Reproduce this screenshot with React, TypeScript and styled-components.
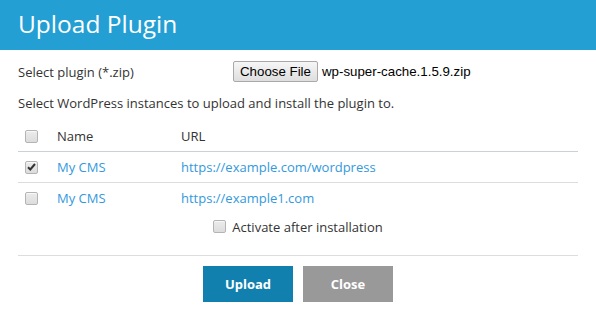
import React from "react";
import styled, { createGlobalStyle } from "styled-components";

const Global = createGlobalStyle`
  html, body { margin: 0; padding: 0; background: #fff; }
  body { font-family: "Open Sans", "Liberation Sans", sans-serif; font-size: 13px; color: #333; }
`;

const Dialog = styled.div`
  width: 596px;
  height: 311px;
  background: #fff;
  overflow: hidden;
`;

const Header = styled.header`
  height: 50px;
  background: #239fd4;
  padding: 0 18px;
  display: flex;
  align-items: center;
`;

const Title = styled.h1`
  margin: 0;
  font-weight: 400;
  font-size: 24.5px;
  color: #fff;
  line-height: 1;
  position: relative;
  top: -1px;
`;

const Body = styled.div`
  padding: 11px 18px 0;
`;

const FileRow = styled.div`
  display: flex;
  align-items: center;
  height: 21px;
`;

const Label = styled.span`
  width: 215px;
  flex: none;
  line-height: 21px;
  position: relative;
  top: 1px;
`;

const FileButton = styled.button`
  font-family: "Liberation Sans", Arial, sans-serif;
  font-size: 13.3px;
  color: #000;
  height: 21px;
  width: 85px;
  padding: 0;
  border: 1px solid #a9a9a9;
  border-radius: 2px;
  background: linear-gradient(#f6f6f6, #dedede);
`;

const FileName = styled.span`
  font-family: "Liberation Sans", Arial, sans-serif;
  font-size: 13.3px;
  color: #000;
  margin-left: 4px;
`;

const Intro = styled.p`
  margin: 0;
  height: 28px;
  line-height: 20px;
  padding-top: 11px;
`;

const Table = styled.div`
  display: flex;
  flex-direction: column;
`;

const Row = styled.div<{ $line?: "blue" | "gray" | "none" }>`
  display: grid;
  grid-template-columns: 39px 124px 1fr;
  align-items: center;
  height: 30px;
  border-bottom: 1px solid
    ${(p) => (p.$line === "blue" ? "#c9d1d9" : p.$line === "gray" ? "#dddddd" : "transparent")};
`;

const CheckCell = styled.div`
  padding-left: 7px;
  display: flex;
  align-items: center;
`;

const Box = styled.span<{ $checked?: boolean }>`
  box-sizing: border-box;
  width: 13px;
  height: 13px;
  border: 1px solid #b4b4b4;
  border-radius: 2px;
  background: linear-gradient(#ececec, #dcdcdc);
  box-shadow: inset 0 1px 0 #f8f8f8;
  display: inline-flex;
  align-items: center;
  justify-content: center;
  flex: none;
`;

const HeadText = styled.span`
  color: #333;
`;

const Link = styled.a`
  color: #3399dd;
  text-decoration: none;
`;

const ActivateRow = styled.div`
  display: flex;
  align-items: center;
  justify-content: center;
  gap: 6px;
  height: 25px;
  border-bottom: 1px solid #dddddd;
  padding-bottom: 16px;
`;

const Actions = styled.div`
  display: flex;
  justify-content: center;
  gap: 10px;
  padding-top: 10px;
`;

const Btn = styled.button<{ $variant: "primary" | "muted" }>`
  width: 90px;
  height: 36px;
  border: none;
  color: #fff;
  font-family: "Open Sans", "Liberation Sans", sans-serif;
  font-size: 13px;
  font-weight: 700;
  background: ${(p) => (p.$variant === "primary" ? "#1180ae" : "#999999")};
`;

const Check = ({ checked }: { checked?: boolean }) => (
  <Box $checked={checked}>
    {checked && (
      <svg width="9" height="8" viewBox="0 0 9 8">
        <path d="M1 4.2 L3.3 6.5 L8 1" fill="none" stroke="#333" strokeWidth="2" />
      </svg>
    )}
  </Box>
);

const rows = [
  { name: "My CMS", url: "https://example.com/wordpress", checked: true },
  { name: "My CMS", url: "https://example1.com", checked: false },
];

export default function App() {
  return (
    <>
      <Global />
      <Dialog>
        <Header>
          <Title>Upload Plugin</Title>
        </Header>
        <Body>
          <FileRow>
            <Label>Select plugin (*.zip)</Label>
            <FileButton>Choose File</FileButton>
            <FileName>wp-super-cache.1.5.9.zip</FileName>
          </FileRow>
          <Intro>Select WordPress instances to upload and install the plugin to.</Intro>
          <Table>
            <Row $line="blue">
              <CheckCell>
                <Check />
              </CheckCell>
              <HeadText>Name</HeadText>
              <HeadText>URL</HeadText>
            </Row>
            {rows.map((r, i) => (
              <Row key={i} $line={i === 0 ? "gray" : "none"}>
                <CheckCell>
                  <Check checked={r.checked} />
                </CheckCell>
                <Link href="#">{r.name}</Link>
                <Link href="#">{r.url}</Link>
              </Row>
            ))}
          </Table>
          <ActivateRow>
            <Check />
            <span>Activate after installation</span>
          </ActivateRow>
          <Actions>
            <Btn $variant="primary">Upload</Btn>
            <Btn $variant="muted">Close</Btn>
          </Actions>
        </Body>
      </Dialog>
    </>
  );
}
